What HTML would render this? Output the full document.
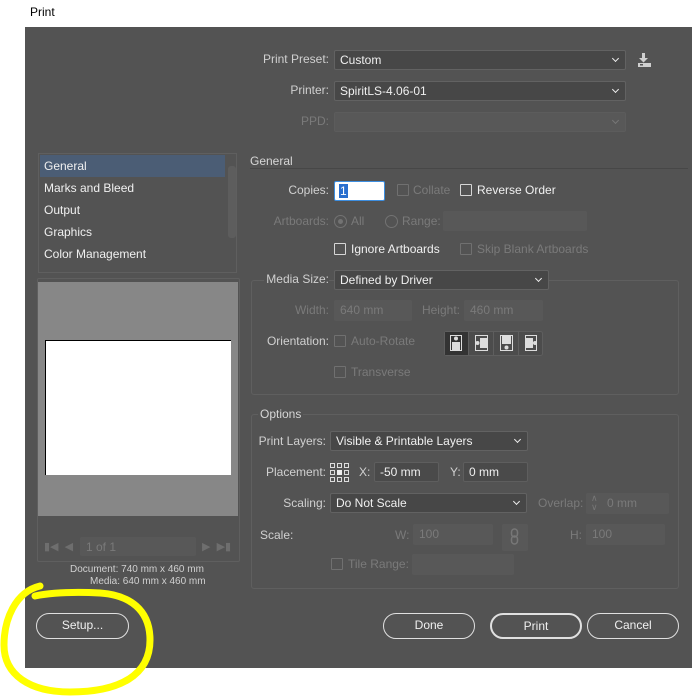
<!DOCTYPE html>
<html><head><meta charset="utf-8"><style>
*{box-sizing:border-box;margin:0;padding:0}
body{width:692px;height:699px;background:#fff;position:relative;overflow:hidden;font-family:"Liberation Sans",sans-serif;font-size:12px;color:#e6e6e6}
.a{position:absolute;white-space:nowrap}
#dlg{position:absolute;left:25px;top:27px;width:667px;height:641px;background:#535353}
.lbl{position:absolute;text-align:right;color:#d0d0d0;line-height:14px}
.dis{color:#7a7a7a}
.sel{position:absolute;background:#474747;border:1px solid #626262;border-radius:2px;color:#f0f0f0;padding-left:5px;line-height:18px}
.sel:after{content:"";position:absolute;right:7px;top:5px;width:4px;height:4px;border-right:1.5px solid #eee;border-bottom:1.5px solid #eee;transform:rotate(45deg)}
.sel.d{background:#585858;border-color:#5c5c5c}
.sel.d:after{border-color:#777}
.fld{position:absolute;background:#4a4a4a;border:1px solid #5e5e5e;border-radius:2px;color:#f0f0f0;padding-left:5px;line-height:18px}
.fld.d{background:#585858;border-color:#585858;color:#7a7a7a}
.cb{position:absolute;width:12px;height:12px;border:1px solid #d6d6d6;border-radius:1px}
.cb.d{border-color:#707070}
.rd{position:absolute;width:13px;height:13px;border:1px solid #737373;border-radius:50%}
.grp{position:absolute;border:1px solid #5f5f5f;border-radius:3px}
.btn{position:absolute;height:26px;border:1.5px solid #e0e0e0;border-radius:13px;text-align:center;line-height:23px;color:#f0f0f0}
.row{position:absolute;left:44px;color:#f0f0f0}
</style></head><body>
<div class="a" style="left:30px;top:5px;color:#000;font-size:12px">Print</div>
<div id="dlg"></div>

<!-- top -->
<div class="lbl" style="left:230px;width:99px;top:52px">Print Preset:</div>
<div class="sel" style="left:334px;top:50px;width:292px;height:20px">Custom</div>
<svg class="a" style="left:636px;top:52px" width="16" height="16"><path d="M6 1h3v5h3l-4.5 4.5L3 6h3z" fill="#cfcfcf"/><rect x="2" y="11" width="13" height="4" fill="#cfcfcf"/><rect x="4" y="12" width="3" height="1.5" fill="#535353"/></svg>
<div class="lbl" style="left:230px;width:99px;top:83px">Printer:</div>
<div class="sel" style="left:334px;top:81px;width:292px;height:20px">SpiritLS-4.06-01</div>
<div class="lbl dis" style="left:230px;width:99px;top:114px">PPD:</div>
<div class="sel d" style="left:334px;top:112px;width:292px;height:20px"></div>

<!-- list -->
<div class="a" style="left:38px;top:153px;width:199px;height:120px;border:1px solid #5f5f5f;overflow:hidden">
 <div class="a" style="left:1px;top:1px;width:185px;height:22px;background:#4b5d75"></div>
 <div class="a" style="left:187px;top:3px;width:10px;height:112px;"></div>
 <div class="a" style="left:189px;top:12px;width:8px;height:72px;background:#5d5d5d;border-radius:3px"></div>
</div>
<div class="row" style="top:159px">General</div>
<div class="row" style="top:181px">Marks and Bleed</div>
<div class="row" style="top:203px">Output</div>
<div class="row" style="top:225px">Graphics</div>
<div class="row" style="top:247px">Color Management</div>

<!-- preview -->
<div class="a" style="left:37px;top:278px;width:203px;height:284px;border:1px solid #5f5f5f;border-radius:2px"></div>
<div class="a" style="left:38px;top:282px;width:200px;height:234px;background:#878787"></div>
<div class="a" style="left:45px;top:340px;width:186px;height:135px;background:#fff;border-top:1px solid #000;border-left:1px solid #000"></div>
<div class="a dis" style="left:44px;top:540px;font-size:11px;color:#6e6e6e">&#x25AE;&#x25C0;&nbsp;&nbsp;&#x25C0;</div>
<div class="fld d" style="left:80px;top:537px;width:116px;height:19px">1 of 1</div>
<div class="a" style="left:202px;top:540px;font-size:11px;color:#6e6e6e">&#x25B6;&nbsp;&nbsp;&#x25B6;&#x25AE;</div>
<div class="a" style="left:70px;top:564px;font-size:10px;color:#d0d0d0">Document: 740 mm x 460 mm</div>
<div class="a" style="left:90px;top:576px;font-size:10px;color:#d0d0d0">Media: 640 mm x 460 mm</div>

<!-- General -->
<div class="a" style="left:250px;top:154px;color:#d6d6d6">General</div>
<div class="a" style="left:250px;top:168px;width:438px;height:1px;background:#474747"></div>
<div class="lbl" style="left:230px;width:99px;top:183px">Copies:</div>
<div class="a" style="left:334px;top:181px;width:51px;height:20px;background:#fff;border:1px solid #3d8ee0;border-radius:2px"><span style="position:absolute;left:4px;top:2px;background:#2a6fce;color:#fff;line-height:14px;padding:0 1px">1</span></div>
<div class="cb d" style="left:397px;top:184px"></div><div class="a dis" style="left:413px;top:183px">Collate</div>
<div class="cb" style="left:460px;top:184px"></div><div class="a" style="left:477px;top:183px;color:#f0f0f0">Reverse Order</div>
<div class="lbl dis" style="left:230px;width:99px;top:214px">Artboards:</div>
<div class="rd" style="left:334px;top:215px"><div style="position:absolute;left:3px;top:3px;width:5px;height:5px;border-radius:50%;background:#737373"></div></div>
<div class="a dis" style="left:351px;top:214px">All</div>
<div class="rd" style="left:385px;top:215px"></div><div class="a dis" style="left:402px;top:214px">Range:</div>
<div class="fld d" style="left:443px;top:211px;width:144px;height:20px"></div>
<div class="cb" style="left:334px;top:243px"></div><div class="a" style="left:351px;top:242px;color:#f0f0f0">Ignore Artboards</div>
<div class="cb d" style="left:460px;top:243px"></div><div class="a dis" style="left:477px;top:242px">Skip Blank Artboards</div>

<div class="grp" style="left:251px;top:280px;width:428px;height:115px"></div>
<div class="lbl" style="left:264px;width:65px;top:272px;background:#535353;padding-right:0">Media Size:</div>
<div class="sel" style="left:334px;top:270px;width:215px;height:20px">Defined by Driver</div>
<div class="lbl dis" style="left:260px;width:69px;top:303px">Width:</div>
<div class="fld d" style="left:334px;top:300px;width:78px;height:21px">640 mm</div>
<div class="lbl dis" style="left:410px;width:50px;top:303px">Height:</div>
<div class="fld d" style="left:464px;top:300px;width:79px;height:21px">460 mm</div>
<div class="lbl" style="left:260px;width:69px;top:334px">Orientation:</div>
<div class="cb d" style="left:334px;top:335px"></div><div class="a dis" style="left:351px;top:334px">Auto-Rotate</div>
<svg class="a" style="left:444px;top:331px" width="99" height="25">
<rect x="0.5" y="0.5" width="98" height="24" rx="2" fill="#4c4c4c" stroke="#5e5e5e"/>
<rect x="1" y="1" width="23" height="23" fill="#333"/>
<line x1="24.5" y1="1" x2="24.5" y2="24" stroke="#5e5e5e"/><line x1="49.5" y1="1" x2="49.5" y2="24" stroke="#5e5e5e"/><line x1="74.5" y1="1" x2="74.5" y2="24" stroke="#5e5e5e"/>
<g fill="none" stroke="#ddd"><rect x="6.5" y="4.5" width="11" height="15"/><rect x="31.5" y="4.5" width="12" height="15"/><rect x="56.5" y="4.5" width="12" height="15"/><rect x="81.5" y="4.5" width="11" height="15"/></g>
<g fill="#ddd"><circle cx="12" cy="7.5" r="2"/><rect x="8" y="11" width="8" height="9"/><rect x="36" y="7" width="8" height="10"/><circle cx="33.5" cy="12" r="2"/><rect x="58" y="5" width="9" height="8"/><circle cx="62.5" cy="16.5" r="2"/><rect x="82" y="7" width="7" height="10"/><circle cx="91" cy="12" r="2"/></g>
</svg>
<div class="cb d" style="left:334px;top:366px"></div><div class="a dis" style="left:351px;top:365px">Transverse</div>

<!-- Options -->
<div class="grp" style="left:251px;top:414px;width:428px;height:175px"></div>
<div class="a" style="left:258px;top:407px;color:#d6d6d6;background:#535353;padding:0 2px">Options</div>
<div class="lbl" style="left:258px;width:68px;top:434px">Print Layers:</div>
<div class="sel" style="left:330px;top:431px;width:198px;height:20px">Visible &amp; Printable Layers</div>
<div class="lbl" style="left:258px;width:68px;top:465px">Placement:</div>
<svg class="a" style="left:330px;top:463px" width="20" height="20"><g fill="none" stroke="#ddd"><rect x="0.5" y="0.5" width="4" height="4"/><rect x="7.5" y="0.5" width="4" height="4"/><rect x="14.5" y="0.5" width="4" height="4"/><rect x="0.5" y="7.5" width="4" height="4"/><rect x="14.5" y="7.5" width="4" height="4"/><rect x="0.5" y="14.5" width="4" height="4"/><rect x="7.5" y="14.5" width="4" height="4"/><rect x="14.5" y="14.5" width="4" height="4"/></g><rect x="7" y="7" width="5" height="5" fill="#eee"/></svg>
<div class="a" style="left:359px;top:465px;color:#d0d0d0">X:</div>
<div class="fld" style="left:374px;top:462px;width:65px;height:20px">-50 mm</div>
<div class="a" style="left:450px;top:465px;color:#d0d0d0">Y:</div>
<div class="fld" style="left:463px;top:462px;width:65px;height:20px">0 mm</div>
<div class="lbl" style="left:258px;width:68px;top:496px">Scaling:</div>
<div class="sel" style="left:330px;top:493px;width:197px;height:20px">Do Not Scale</div>
<div class="a dis" style="left:538px;top:496px">Overlap:</div>
<div class="fld d" style="left:586px;top:493px;width:83px;height:21px;padding-left:20px">0 mm</div>
<div class="a" style="left:591px;top:494px;color:#777;font-size:9px;line-height:9px">&#x2227;<br>&#x2228;</div>
<div class="a" style="left:260px;top:528px;color:#d0d0d0">Scale:</div>
<div class="a dis" style="left:395px;top:528px">W:</div>
<div class="fld d" style="left:413px;top:524px;width:80px;height:21px">100</div>
<div class="fld d" style="left:502px;top:524px;width:26px;height:27px"></div>
<svg class="a" style="left:510px;top:528px" width="10" height="18"><g fill="none" stroke="#777" stroke-width="1.5"><rect x="1.5" y="1" width="6" height="8" rx="3"/><rect x="1.5" y="8" width="6" height="8" rx="3"/></g></svg>
<div class="a dis" style="left:570px;top:528px">H:</div>
<div class="fld d" style="left:586px;top:524px;width:79px;height:21px">100</div>
<div class="cb d" style="left:331px;top:558px"></div><div class="a dis" style="left:348px;top:557px">Tile Range:</div>
<div class="fld d" style="left:412px;top:554px;width:102px;height:21px"></div>

<!-- buttons -->
<div class="btn" style="left:36px;top:613px;width:93px">Setup...</div>
<div class="btn" style="left:383px;top:613px;width:92px">Done</div>
<div class="btn" style="left:490px;top:613px;width:92px;border-width:2px">Print</div>
<div class="btn" style="left:587px;top:613px;width:92px">Cancel</div>

<svg class="a" style="left:0;top:0" width="692" height="699"><path d="M40 586 C15 592 4 620 4 645 C4 675 30 692 70 692 C120 692 150 675 150 640 C150 610 130 595 100 593 C80 592 55 592 35 596" fill="none" stroke="#ffff00" stroke-width="7" stroke-linecap="round"/></svg>
</body></html>
